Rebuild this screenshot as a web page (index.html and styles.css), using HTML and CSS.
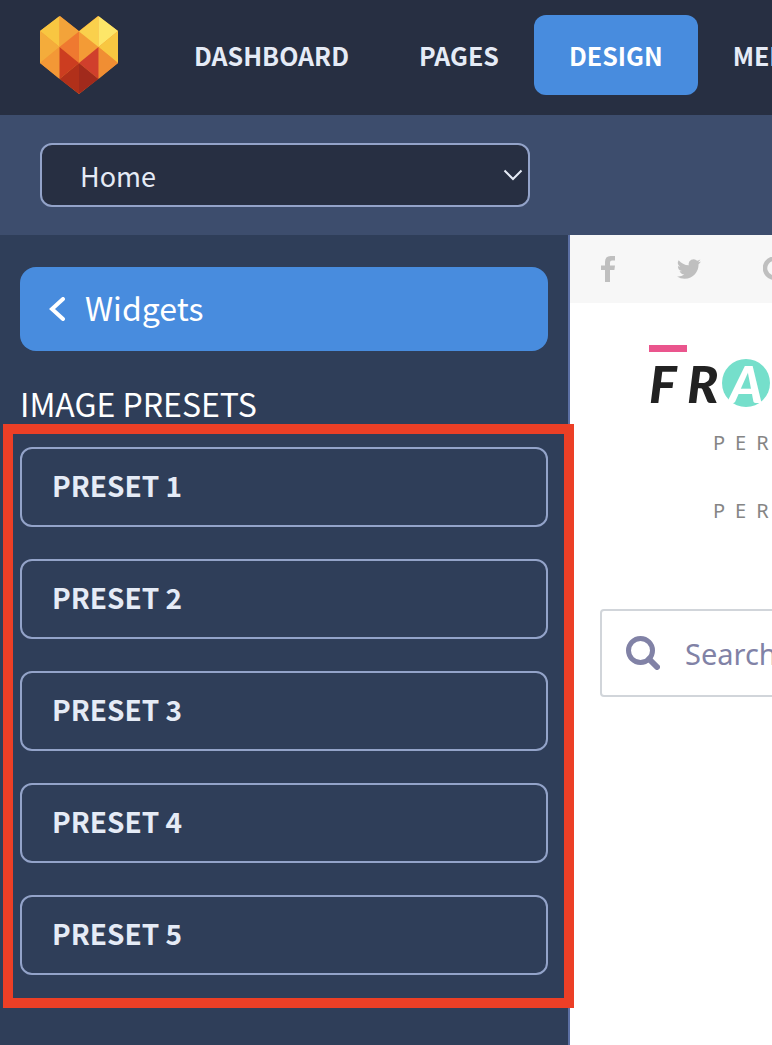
FILE: index.html
```html
<!DOCTYPE html>
<html lang="en">
<head>
<meta charset="utf-8">
<title>Design – Image presets</title>
<link rel="stylesheet" href="styles.css">
</head>
<body>
<header class="topbar">
  <a class="brand" href="#" aria-label="Home">
    <svg width="78" height="78" viewBox="0 0 78 78" shape-rendering="geometricPrecision">
      <path fill="#f39836" d="M0 15 20 0 39 15 58 0 78 15V47L39 78 0 47Z"/>
      <path fill="#f8c641" d="M0 15 19.500 0V31Z"/>
      <path fill="#f3a33a" d="M19.500 0 39 15.500 19.500 31Z"/>
      <path fill="#f4ac3b" d="M0 15 19.500 31 0 47Z"/>
      <path fill="#f39836" d="M0 47 19.500 31V63Z"/>
      <path fill="#ef7930" d="M39 15.500V47L19.500 31Z"/>
      <path fill="#f39b36" d="M39 15.500 58.500 31 39 47Z"/>
      <path fill="#fad04c" d="M39 15.500 58.500 0V31Z"/>
      <path fill="#fde668" d="M58.500 0 78 15 58.500 31Z"/>
      <path fill="#f8c741" d="M78 15V47L58.500 31Z"/>
      <path fill="#f08e33" d="M58.500 31 78 47 58.500 63Z"/>
      <path fill="#cc3d20" d="M19.500 31 39 47 19.500 63Z"/>
      <path fill="#d03f2c" d="M58.500 31V63L39 47Z"/>
      <path fill="#b1301a" d="M39 47V78L19.500 63Z"/>
      <path fill="#a12a1c" d="M39 47 58.500 63 39 78Z"/>
    </svg>
  </a>
  <nav class="nav">
    <a class="nav-link" href="#">DASHBOARD</a>
    <a class="nav-link" href="#">PAGES</a>
    <a class="nav-link is-active" href="#" aria-current="page">DESIGN</a>
    <a class="nav-link" href="#">MEDIA</a>
  </nav>
</header>

<div class="toolbar">
  <div class="page-picker">
    <select class="page-select" aria-label="Page">
      <option>Home</option>
    </select>
    <svg class="page-arrow" width="20" height="12" viewBox="0 0 20 12" fill="none" stroke="#e5ebf6" stroke-width="2" aria-hidden="true"><path d="M1.500 1.500 10 10 18.500 1.500"/></svg>
  </div>
</div>

<main class="workspace">
  <aside class="sidebar">
    <button class="back" type="button">
      <svg width="16" height="24" viewBox="0 0 16 24" fill="none" stroke="#fff" stroke-width="4" stroke-linecap="round" stroke-linejoin="miter" aria-hidden="true"><path d="M14 2 3 12 14 22"/></svg>
      <span class="back-label">Widgets</span>
    </button>
    <h1 class="title">IMAGE PRESETS</h1>
    <div class="presets">
      <button class="preset" type="button">PRESET 1</button>
      <button class="preset" type="button">PRESET 2</button>
      <button class="preset" type="button">PRESET 3</button>
      <button class="preset" type="button">PRESET 4</button>
      <button class="preset" type="button">PRESET 5</button>
    </div>
  </aside>

  <section class="preview">
    <div class="canvas">
      <div class="social">
        <a href="#" aria-label="Facebook"><svg width="14" height="26" viewBox="0 0 14 26" fill="#bfbfbf"><path d="M4 26V14H0V9.500H4V6Q4 0 9.500 0H14V4.500H11Q9 4.500 9 6.500V9.500H14L13.400 14H9V26Z"/></svg></a>
        <a href="#" aria-label="Twitter"><svg width="24" height="20" viewBox="0 2 24 20" fill="#bfbfbf"><path d="M23.950 4.570a10 10 0 0 1-2.820.770 4.960 4.960 0 0 0 2.160-2.720c-.950.550-2 .960-3.130 1.180a4.920 4.920 0 0 0-8.380 4.480C7.690 8.100 4.070 6.130 1.640 3.160a4.920 4.920 0 0 0 1.520 6.570 4.900 4.900 0 0 1-2.230-.610v.060a4.920 4.920 0 0 0 3.950 4.830 5 5 0 0 1-2.210.080 4.940 4.940 0 0 0 4.600 3.420A9.870 9.870 0 0 1 0 19.540a13.990 13.990 0 0 0 7.550 2.210c9.050 0 14-7.500 14-13.980 0-.210 0-.420-.020-.630a9.940 9.940 0 0 0 2.420-2.570Z"/></svg></a>
        <a href="#" aria-label="Google"><svg width="24" height="24" viewBox="0 0 24 24" fill="none" stroke="#bfbfbf" stroke-width="4.500"><path d="M19 5A9.600 9.600 0 1 0 21.200 12H12"/></svg></a>
      </div>
      <div class="site-logo">
        <span class="site-bar"></span>
        <div class="site-name"><span>F</span><span>R</span><span class="site-dot">A</span></div>
      </div>
      <p class="tagline">PER</p>
      <p class="tagline">PER</p>
      <label class="search">
        <svg width="34" height="34" viewBox="0 0 34 34" fill="none" stroke="#8182a6" stroke-width="5" aria-hidden="true"><circle cx="14.500" cy="14.500" r="12"/><path d="M23 23 31 31" stroke-width="6" stroke-linecap="round"/></svg>
        <input type="search" aria-label="Search" placeholder="Search">
      </label>
    </div>
  </section>
</main>
</body>
</html>
```

FILE: styles.css
```css
* {
  box-sizing: border-box;
}

body {
  margin: 0;
  min-height: 100vh;
  display: flex;
  flex-direction: column;
  overflow-x: hidden;
  background: #2f3e59;
  color: #fff;
  font-family: "Noto Sans CJK SC", "Noto Sans", sans-serif;
}

button,
select {
  margin: 0;
  font-family: inherit;
  text-align: left;
}

a {
  color: inherit;
  text-decoration: none;
}

svg {
  display: block;
  flex: none;
}

.topbar {
  display: flex;
  align-items: flex-start;
  gap: 41px;
  padding: 15px 0 20px 40px;
  background: #272f42;
  overflow: hidden;
}

.brand {
  padding-top: 1px;
}

.nav {
  display: flex;
}

.nav-link {
  padding: 0 35px;
  border-radius: 12px;
  color: #e5ebf6;
  font-size: 25px;
  font-weight: 700;
  line-height: 80px;
  white-space: nowrap;
}

.nav-link.is-active {
  background: #488cde;
  color: #fff;
}

.toolbar {
  padding: 28px 40px;
  background: #3d4d6d;
}

.page-picker {
  position: relative;
  max-width: 490px;
}

.page-select {
  display: block;
  width: 100%;
  height: 64px;
  padding: 0 38px;
  border: 2px solid #93a3c9;
  border-radius: 12px;
  appearance: none;
  background: #272f42;
  color: #e5ebf6;
  font-size: 27px;
}

.page-arrow {
  position: absolute;
  top: 26px;
  right: 7px;
  pointer-events: none;
}

.workspace {
  flex: 1;
  display: flex;
}

.sidebar {
  flex: none;
  width: 570px;
  padding: 32px 20px;
  border-right: 2px solid #5b6fa3;
  background: #2f3e59;
}

.back {
  display: flex;
  align-items: center;
  gap: 20px;
  width: 100%;
  height: 84px;
  padding: 0 29px;
  border: 0;
  border-radius: 16px;
  background: #488cde;
  color: #fff;
  font-size: 32px;
}

.back-label {
  padding-bottom: 4px;
}

.title {
  margin: 32px 0 24px;
  font-size: 32px;
  font-weight: 400;
  line-height: 40px;
}

.presets {
  position: relative;
  display: grid;
  gap: 32px;
}

.presets::after {
  content: "";
  position: absolute;
  inset: -23px -26px -33px -17px;
  border: 10px solid #ec3f26;
  pointer-events: none;
}

.preset {
  height: 80px;
  padding: 0 30px 4px;
  border: 2px solid #93a3c9;
  border-radius: 12px;
  background: none;
  color: #e5ebf6;
  font-size: 28px;
  font-weight: 700;
}

.preview {
  flex: 1;
  min-width: 0;
  overflow: hidden;
  background: #fff;
}

.canvas {
  min-width: 480px;
}

.social {
  display: flex;
  align-items: center;
  gap: 62px;
  height: 68px;
  padding: 0 31px;
  background: #f7f7f7;
}

.site-logo {
  padding: 42px 0 0 79px;
}

.site-bar {
  display: block;
  width: 38px;
  height: 7px;
  background: #ea558d;
}

.site-name {
  display: grid;
  grid-template-columns: 38px 35px 48px;
  align-items: center;
  margin-top: 7px;
  color: #222;
  font-family: Lato, sans-serif;
  font-size: 52px;
  font-style: italic;
  font-weight: 900;
  line-height: 48px;
}

.site-dot {
  height: 48px;
  border-radius: 50%;
  background: #75dfcb;
  color: #fff;
  text-align: center;
}

.tagline {
  margin: 20px 0 0 143px;
  color: #858585;
  font-family: "Noto Sans", sans-serif;
  font-size: 20px;
  letter-spacing: 10px;
  line-height: 32px;
}

.tagline + .tagline {
  margin-top: 36px;
}

.search {
  display: flex;
  align-items: center;
  gap: 25px;
  height: 88px;
  margin: 82px 30px 0;
  padding: 0 24px;
  border: 2px solid #d1d5da;
  border-radius: 4px;
}

.search input {
  flex: 1;
  min-width: 0;
  padding: 0;
  border: 0;
  outline: 0;
  background: none;
  color: #8182a6;
  font-family: "Noto Sans", sans-serif;
  font-size: 29px;
}

.search input::placeholder {
  color: #8182a6;
}
```
